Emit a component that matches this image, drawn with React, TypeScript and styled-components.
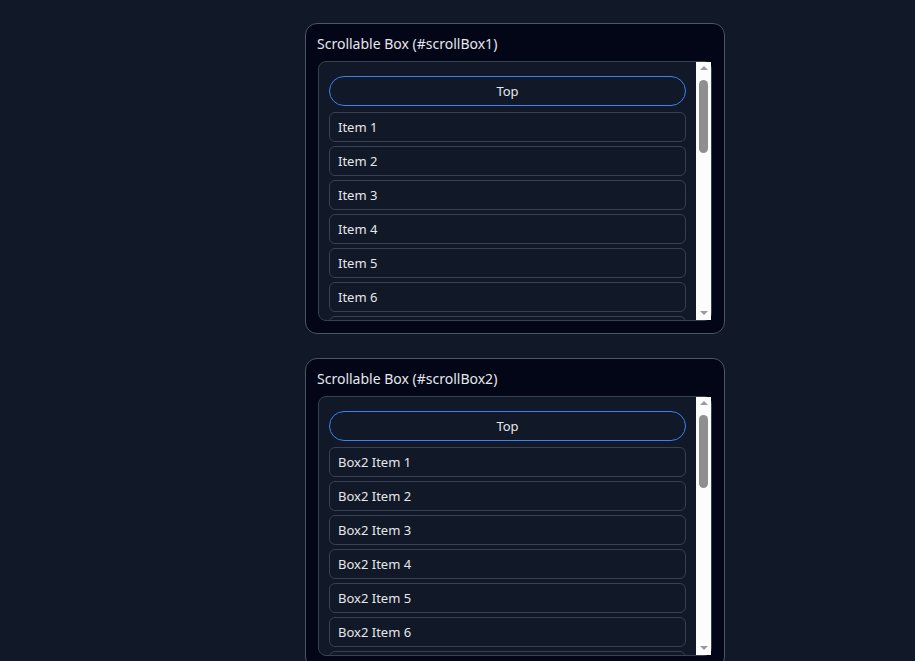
import React from "react";
import styled, { createGlobalStyle } from "styled-components";

const Global = createGlobalStyle`
  html, body {
    margin: 0;
    padding: 0;
    background: #111827;
    overflow: hidden;
    font-family: "Noto Sans", "Open Sans", "Liberation Sans", sans-serif;
    color: #e5e7eb;
  }
  * { box-sizing: border-box; }
`;

const Page = styled.div`
  display: flex;
  flex-direction: column;
  gap: 24px;
  padding: 23px 0 0 305px;
`;

const Card = styled.section`
  width: 420px;
  background: #020617;
  border: 1px solid #4b5563;
  border-radius: 12px;
  padding: 12px;
`;

const Title = styled.h3`
  margin: 0 0 10px -1px;
  font-size: 14px;
  line-height: 15px;
  font-weight: 400;
  color: #e5e7eb;
`;

const ScrollBox = styled.div`
  height: 260px;
  display: flex;
  background: #111827;
  border: 1px solid #374151;
  border-radius: 8px;
`;

const List = styled.div`
  flex: 1;
  min-width: 0;
  overflow-y: auto;
  scrollbar-width: none;
  padding: 14px 10px 10px;
  display: flex;
  flex-direction: column;
  gap: 4px;
  border-radius: 7px 0 0 7px;
  &::-webkit-scrollbar { display: none; }
`;

const Scrollbar = styled.div`
  flex: none;
  width: 15px;
  background: #fcfcfc;
  display: flex;
  flex-direction: column;
`;

const Arrow = styled.div<{ $dir: "up" | "down" }>`
  flex: none;
  height: 15px;
  display: flex;
  justify-content: center;
  align-items: ${(p) => (p.$dir === "up" ? "flex-start" : "flex-end")};
  padding: ${(p) => (p.$dir === "up" ? "4px 0 0" : "0 0 5px")};
  &::before {
    content: "";
    width: 0;
    height: 0;
    border-left: 4px solid transparent;
    border-right: 4px solid transparent;
    ${(p) =>
      p.$dir === "up"
        ? "border-bottom: 4px solid #9a9a9a;"
        : "border-top: 4px solid #9a9a9a;"}
  }
`;

const Track = styled.div`
  flex: 1;
  padding: 3px;
`;

const Thumb = styled.div`
  width: 9px;
  height: 73px;
  border-radius: 5px;
  background: #8f8f8f;
`;

const TopButton = styled.button`
  flex: none;
  height: 30px;
  margin-bottom: 2px;
  border: 1px solid #3b82f6;
  border-radius: 999px;
  background: #111827;
  color: #e5e7eb;
  font-family: inherit;
  font-size: 13px;
`;

const Item = styled.div`
  flex: none;
  height: 30px;
  display: flex;
  align-items: center;
  padding: 0 8px;
  border: 1px solid #374151;
  border-radius: 6px;
  font-size: 13px;
  color: #e5e7eb;
`;

const boxes = [
  { id: "scrollBox1", prefix: "Item" },
  { id: "scrollBox2", prefix: "Box2 Item" },
];

export default function App() {
  return (
    <>
      <Global />
      <Page>
        {boxes.map((b) => (
          <Card key={b.id}>
            <Title>Scrollable Box (#{b.id})</Title>
            <ScrollBox>
              <List id={b.id}>
                <TopButton>Top</TopButton>
                {Array.from({ length: 22 }, (_, i) => (
                  <Item key={i}>
                    {b.prefix} {i + 1}
                  </Item>
                ))}
              </List>
              <Scrollbar aria-hidden="true">
                <Arrow $dir="up" />
                <Track>
                  <Thumb />
                </Track>
                <Arrow $dir="down" />
              </Scrollbar>
            </ScrollBox>
          </Card>
        ))}
      </Page>
    </>
  );
}
